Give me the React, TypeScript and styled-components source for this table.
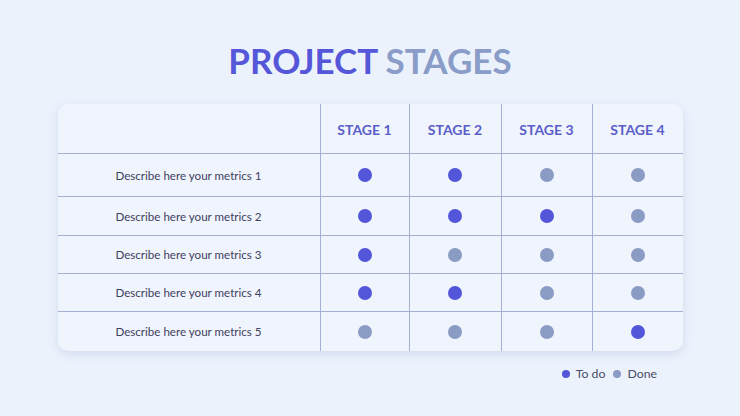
import React from "react";
import styled, { createGlobalStyle } from "styled-components";

const Global = createGlobalStyle`
  html, body { margin: 0; padding: 0; }
  body {
    background: #ecf2fc;
    font-family: Lato, "Open Sans", sans-serif;
    width: 740px;
    height: 416px;
    overflow: hidden;
  }
`;

const Page = styled.div`
  width: 740px;
  height: 416px;
  display: flex;
  flex-direction: column;
  align-items: center;
  padding-top: 40px;
  box-sizing: border-box;
`;

const Title = styled.h1`
  margin: 0;
  font-size: 35px;
  line-height: 40px;
  font-weight: 700;
  letter-spacing: 0;
  color: #5557d8;
`;

const Accent = styled.span`
  color: #8a9cc8;
`;

const Card = styled.div`
  margin-top: 24px;
  width: 625px;
  background: #eff4fd;
  border-radius: 10px;
  box-shadow: 0 3px 10px rgba(120, 140, 190, 0.22);
  display: grid;
  grid-template-columns: 262px 89px 92px 91px 91px;
  overflow: hidden;
`;

const Cell = styled.div<{ $h: number; $first?: boolean; $bottom?: boolean }>`
  height: ${(p) => p.$h}px;
  display: flex;
  align-items: center;
  justify-content: center;
  box-sizing: border-box;
  border-left: ${(p) => (p.$first ? "none" : "1px solid #a6b0d4")};
  border-bottom: ${(p) => (p.$bottom ? "none" : "1px solid #a6b0d4")};
`;

const HeadText = styled.span`
  font-size: 14px;
  font-weight: 700;
  color: #5b5ec9;
  padding-top: 2px;
`;

const Label = styled.span`
  font-size: 11.6px;
  color: #3f4160;
`;

const Dot = styled.span<{ $todo: boolean }>`
  width: 14px;
  height: 14px;
  border-radius: 50%;
  background: ${(p) => (p.$todo ? "#5356d9" : "#8a9bc4")};
`;

const Legend = styled.div`
  align-self: flex-end;
  margin-right: 83px;
  margin-top: 15px;
  display: flex;
  align-items: center;
  gap: 8px;
  font-size: 12.3px;
  color: #4a4d68;
`;

const LegendItem = styled.span`
  display: flex;
  align-items: center;
  gap: 6px;
`;

const LegendDot = styled.span<{ $todo: boolean }>`
  width: 8px;
  height: 8px;
  border-radius: 50%;
  background: ${(p) => (p.$todo ? "#5356d9" : "#8a9bc4")};
`;

const rows: { h: number; v: boolean[] }[] = [
  { h: 43, v: [true, true, false, false] },
  { h: 39, v: [true, true, true, false] },
  { h: 38, v: [true, false, false, false] },
  { h: 38, v: [true, true, false, false] },
  { h: 39, v: [false, false, false, true] },
];

export default function App() {
  return (
    <>
      <Global />
      <Page>
        <Title>
          PROJECT <Accent>STAGES</Accent>
        </Title>
        <Card>
          <Cell $h={50} $first />
          {[1, 2, 3, 4].map((n) => (
            <Cell key={n} $h={50}>
              <HeadText>STAGE {n}</HeadText>
            </Cell>
          ))}
          {rows.map((r, i) => (
            <React.Fragment key={i}>
              <Cell $h={r.h} $first $bottom={i === rows.length - 1}>
                <Label>Describe here your metrics {i + 1}</Label>
              </Cell>
              {r.v.map((t, j) => (
                <Cell key={j} $h={r.h} $bottom={i === rows.length - 1}>
                  <Dot $todo={t} />
                </Cell>
              ))}
            </React.Fragment>
          ))}
        </Card>
        <Legend>
          <LegendItem>
            <LegendDot $todo />
            To do
          </LegendItem>
          <LegendItem>
            <LegendDot $todo={false} />
            Done
          </LegendItem>
        </Legend>
      </Page>
    </>
  );
}
